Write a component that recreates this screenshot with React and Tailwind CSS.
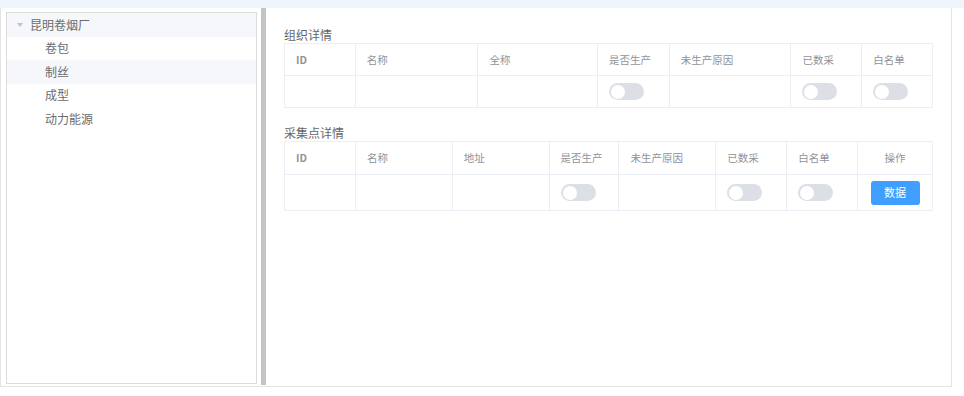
import React from "react";

const font = { fontFamily: '"Noto Sans CJK SC", "Noto Sans", sans-serif' };

function Toggle() {
  return (
    <div className="w-[35px] h-[17px] rounded-full bg-[#dcdfe6] flex items-center px-[2px]">
      <div className="w-[14px] h-[14px] rounded-full bg-white" />
    </div>
  );
}

function DataTable({ cols, row, headH, bodyH }) {
  return (
    <div className="flex border-l border-t border-[#ebeef5]">
      {cols.map((c, i) => (
        <div key={i} style={{ width: c.w }} className="flex flex-col border-r border-[#ebeef5]">
          <div
            style={{ height: headH }}
            className={
              "flex items-center border-b border-[#ebeef5] text-[10.5px] text-[#909399] " +
              (c.center ? "justify-center " : "pl-[11px] ") +
              (c.t === "ID" ? "font-semibold" : "")
            }
          >
            {c.t}
          </div>
          <div
            style={{ height: bodyH }}
            className={"flex items-center border-b border-[#ebeef5] " + (c.center ? "justify-center" : "pl-[11px]")}
          >
            {row[i] === "toggle" && <Toggle />}
            {row[i] === "btn" && (
              <button className="w-[49px] h-[24px] rounded-[3px] bg-[#409eff] text-white text-[11px]">数据</button>
            )}
          </div>
        </div>
      ))}
    </div>
  );
}

export default function App() {
  const tree = [
    { t: "昆明卷烟厂", root: true, hl: true },
    { t: "卷包" },
    { t: "制丝", hl: true },
    { t: "成型" },
    { t: "动力能源" },
  ];

  const org = [
    { t: "ID", w: 71 },
    { t: "名称", w: 123 },
    { t: "全称", w: 120 },
    { t: "是否生产", w: 72 },
    { t: "未生产原因", w: 122 },
    { t: "已数采", w: 71 },
    { t: "白名单", w: 71 },
  ];
  const pts = [
    { t: "ID", w: 71 },
    { t: "名称", w: 97 },
    { t: "地址", w: 97 },
    { t: "是否生产", w: 70 },
    { t: "未生产原因", w: 97 },
    { t: "已数采", w: 71 },
    { t: "白名单", w: 71 },
    { t: "操作", w: 75, center: true },
  ];

  return (
    <div style={font} className="w-[964px] h-[396px] bg-white">
      <div className="h-[8px] bg-[#eef5fd]" />
      <div className="flex w-[952px] h-[379px] border-l border-r border-b border-[#e4e4e4]">
        <div className="pl-[5px] pt-[4px] pb-[2px]">
          <div className="w-[251px] h-full border border-[#dcdcdc] bg-white">
            {tree.map((n, i) => (
              <div
                key={i}
                className={"h-[23.5px] flex items-center text-[12px] text-[#6b6b6b] " + (n.hl ? "bg-[#f5f7fa]" : "")}
              >
                {n.root ? (
                  <>
                    <svg width="6" height="4" viewBox="0 0 6 4" className="ml-[10px] mr-[7px]">
                      <path d="M0 0 L6 0 L3 4 Z" fill="#c0c4cc" />
                    </svg>
                    <span>{n.t}</span>
                  </>
                ) : (
                  <span className="pl-[38px]">{n.t}</span>
                )}
              </div>
            ))}
          </div>
        </div>
        <div className="ml-[4px] w-[5px] h-[377px] bg-[#c4c4c4]" />
        <div className="flex-1 pl-[18px] pt-[19px]">
          <div className="h-[16px] leading-[16px] text-[12px] text-[#666]">组织详情</div>
          <div className="w-[649px]">
            <DataTable cols={org} row={["", "", "", "toggle", "", "toggle", "toggle"]} headH={32} bodyH={32} />
          </div>
          <div className="mt-[17px] h-[16px] leading-[16px] text-[12px] text-[#666]">采集点详情</div>
          <div className="w-[649px]">
            <DataTable
              cols={pts}
              row={["", "", "", "toggle", "", "toggle", "toggle", "btn"]}
              headH={33}
              bodyH={36}
            />
          </div>
        </div>
      </div>
    </div>
  );
}
